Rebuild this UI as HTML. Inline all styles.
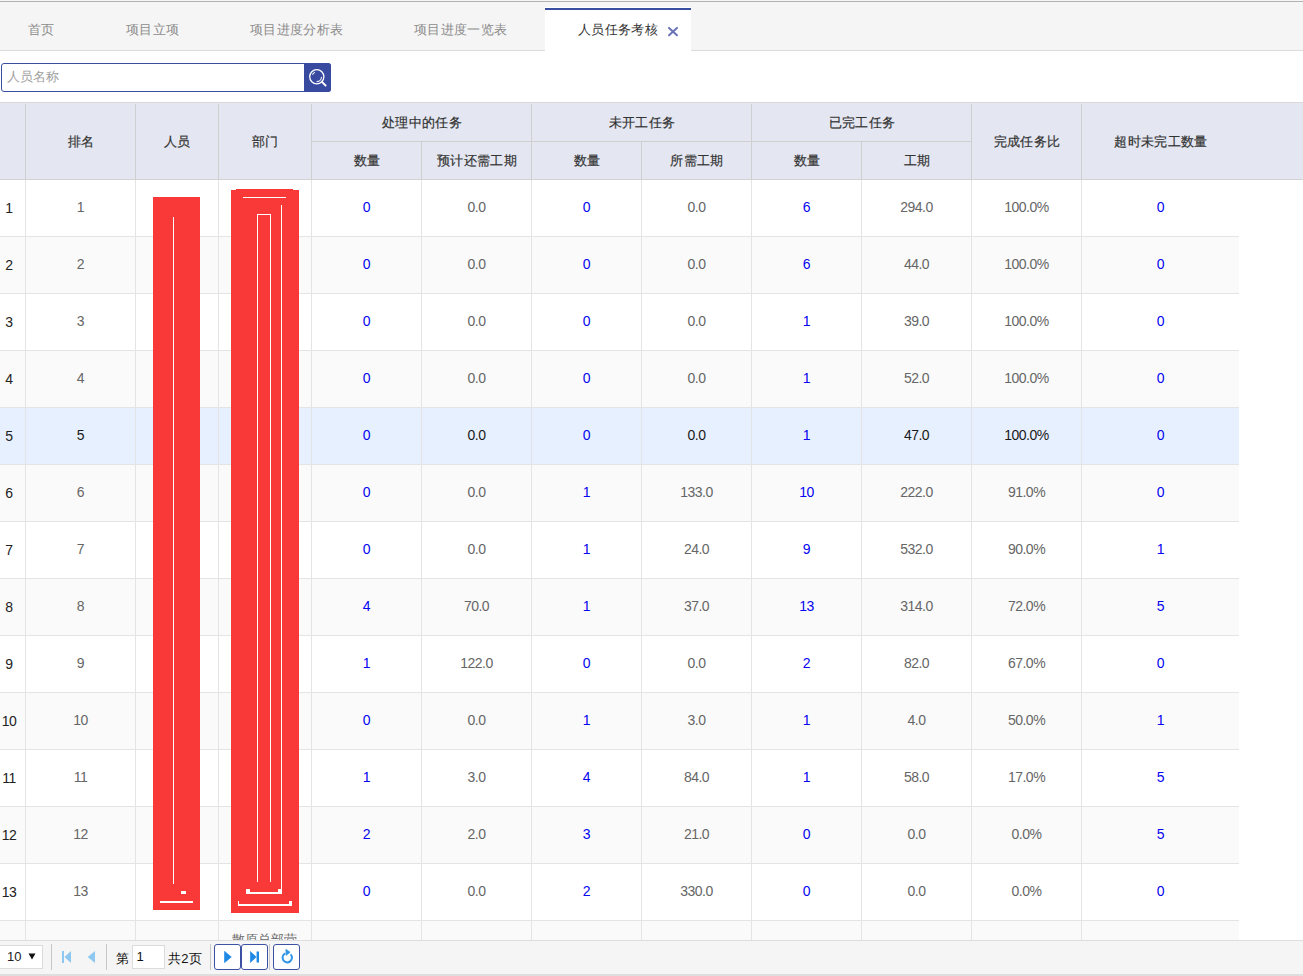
<!DOCTYPE html>
<html><head><meta charset="utf-8"><style>
*{box-sizing:border-box;margin:0;padding:0}
html,body{width:1303px;height:976px;overflow:hidden;background:#fff;font-family:"Liberation Sans",sans-serif;position:relative}
.abs{position:absolute}
.t{position:absolute;white-space:nowrap;line-height:1}
.topline{left:0;top:0;width:1303px;height:1px;background:#f5f5f5}
.topline2{left:0;top:1px;width:1303px;height:1px;background:#b3b0b6}
.tabbar{left:0;top:2px;width:1303px;height:49px;background:#f5f5f5;border-bottom:1px solid #dcdcdc}
.tab{font-size:13px;color:#8c8c8c;top:23.4px;letter-spacing:0.35px}
.acttab{left:545px;top:7px;width:146px;height:44px;background:#fff;border-top:1px solid #fff}
.actbar{left:545px;top:8px;width:146px;height:2px;background:#384ea0}
.search{left:1px;top:63px;width:330px;height:29px;border:1px solid #3a4ea0;border-radius:3px;background:#fff}
.sbtn{left:304px;top:63px;width:27px;height:29px;background:#374aa0;border-radius:0 3px 3px 0}
.ph{left:7px;top:70.4px;font-size:13px;color:#a0a0a0}
.hdr{left:0;top:102px;width:1303px;height:78px;background:#e4e7f1;border-top:1px solid #d8d8d8;border-bottom:1px solid #d2d2d2}
.hv{position:absolute;width:1px;background:#cfcfcf}
.hh{position:absolute;height:1px;background:#cfcfcf}
.ht{font-size:13px;letter-spacing:0.35px;font-weight:normal;-webkit-text-stroke:0.2px #333;color:#333;text-align:center}
.row{position:absolute;left:0;width:1239px;height:57px;border-bottom:1px solid #e4e4e4}
.bv{position:absolute;width:1px;background:#e4e4e4}
.c{position:absolute;font-size:14px;letter-spacing:-0.5px;color:#666;text-align:center;line-height:1}
.b{color:#0505f0}
.k{color:#1a1a1a}
.footer{left:0;top:940px;width:1303px;height:36px;background:#f5f5f5;border-top:1px solid #dedede}
.fbot{left:0;top:974px;width:1303px;height:2px;background:#dedede}
.red{position:absolute;background:#f93838}
.w{position:absolute;background:#fff}
</style></head><body>

<div class="abs topline"></div><div class="abs topline2"></div><div class="abs tabbar"></div>
<div class="t tab" style="left:28px">首页</div>
<div class="t tab" style="left:126px">项目立项</div>
<div class="t tab" style="left:250px">项目进度分析表</div>
<div class="t tab" style="left:414px">项目进度一览表</div>
<div class="abs acttab"></div><div class="abs actbar"></div>
<div class="t tab" style="left:578px;color:#333">人员任务考核</div>
<svg class="abs" style="left:667px;top:26px" width="12" height="12" viewBox="0 0 12 12"><path d="M2 1.9L10 9.3M10 1.9L2 9.3" stroke="#6a74b6" stroke-width="2" stroke-linecap="round"/></svg>
<div class="abs search"></div><div class="abs sbtn"></div><div class="t ph">人员名称</div>
<svg class="abs" style="left:304px;top:63px" width="27" height="29" viewBox="0 0 27 29"><circle cx="12.8" cy="13.7" r="7.1" fill="none" stroke="#fff" stroke-width="1.3"/><path d="M17.9 18.8L21.6 22.5" stroke="#fff" stroke-width="1.9" stroke-linecap="round"/><path d="M8.4 11.8A5 5 0 0 1 10.9 9.2" stroke="#e6e9f5" stroke-width="1.1" fill="none"/><path d="M17.6 13.9A5 5 0 0 1 12.6 18.6" stroke="#e6e9f5" stroke-width="1.1" fill="none"/></svg>
<div class="abs hdr"></div>
<div class="hv" style="left:25px;top:104px;height:75px"></div>
<div class="hv" style="left:135px;top:104px;height:75px"></div>
<div class="hv" style="left:218px;top:104px;height:75px"></div>
<div class="hv" style="left:311px;top:104px;height:75px"></div>
<div class="hv" style="left:531px;top:104px;height:75px"></div>
<div class="hv" style="left:751px;top:104px;height:75px"></div>
<div class="hv" style="left:971px;top:104px;height:75px"></div>
<div class="hv" style="left:1081px;top:104px;height:75px"></div>
<div class="hv" style="left:421px;top:142px;height:37px"></div>
<div class="hv" style="left:641px;top:142px;height:37px"></div>
<div class="hv" style="left:861px;top:142px;height:37px"></div>
<div class="hh" style="left:311px;top:141px;width:660px"></div>
<div class="t ht" style="left:26px;width:110px;top:135px">排名</div>
<div class="t ht" style="left:136px;width:83px;top:135px">人员</div>
<div class="t ht" style="left:219px;width:93px;top:135px">部门</div>
<div class="t ht" style="left:312px;width:220px;top:116px">处理中的任务</div>
<div class="t ht" style="left:532px;width:220px;top:116px">未开工任务</div>
<div class="t ht" style="left:752px;width:220px;top:116px">已完工任务</div>
<div class="t ht" style="left:972px;width:110px;top:135px">完成任务比</div>
<div class="t ht" style="left:1082px;width:158px;top:135px">超时未完工数量</div>
<div class="t ht" style="left:312px;width:110px;top:154px">数量</div>
<div class="t ht" style="left:422px;width:110px;top:154px">预计还需工期</div>
<div class="t ht" style="left:532px;width:110px;top:154px">数量</div>
<div class="t ht" style="left:642px;width:110px;top:154px">所需工期</div>
<div class="t ht" style="left:752px;width:110px;top:154px">数量</div>
<div class="t ht" style="left:862px;width:110px;top:154px">工期</div>
<div class="row" style="top:180px;background:#fff"></div>
<div class="row" style="top:237px;background:#fafafa"></div>
<div class="row" style="top:294px;background:#fff"></div>
<div class="row" style="top:351px;background:#fafafa"></div>
<div class="row" style="top:408px;background:#e7f0fe"></div>
<div class="row" style="top:465px;background:#fafafa"></div>
<div class="row" style="top:522px;background:#fff"></div>
<div class="row" style="top:579px;background:#fafafa"></div>
<div class="row" style="top:636px;background:#fff"></div>
<div class="row" style="top:693px;background:#fafafa"></div>
<div class="row" style="top:750px;background:#fff"></div>
<div class="row" style="top:807px;background:#fafafa"></div>
<div class="row" style="top:864px;background:#fff"></div>
<div class="row" style="top:921px;background:#fafafa"></div>
<div class="bv" style="left:25px;top:180px;height:760px"></div>
<div class="bv" style="left:135px;top:180px;height:760px"></div>
<div class="bv" style="left:218px;top:180px;height:760px"></div>
<div class="bv" style="left:311px;top:180px;height:760px"></div>
<div class="bv" style="left:421px;top:180px;height:760px"></div>
<div class="bv" style="left:531px;top:180px;height:760px"></div>
<div class="bv" style="left:641px;top:180px;height:760px"></div>
<div class="bv" style="left:751px;top:180px;height:760px"></div>
<div class="bv" style="left:861px;top:180px;height:760px"></div>
<div class="bv" style="left:971px;top:180px;height:760px"></div>
<div class="bv" style="left:1081px;top:180px;height:760px"></div>
<div class="c" style="left:-0.5px;width:19px;top:201px;color:#222">1</div>
<div class="c " style="left:25.5px;width:110px;top:200px">1</div>
<div class="c b" style="left:311.5px;width:110px;top:200px">0</div>
<div class="c " style="left:421.5px;width:110px;top:200px">0.0</div>
<div class="c b" style="left:531.5px;width:110px;top:200px">0</div>
<div class="c " style="left:641.5px;width:110px;top:200px">0.0</div>
<div class="c b" style="left:751.5px;width:110px;top:200px">6</div>
<div class="c " style="left:861.5px;width:110px;top:200px">294.0</div>
<div class="c " style="left:971.5px;width:110px;top:200px">100.0%</div>
<div class="c b" style="left:1081.5px;width:158px;top:200px">0</div>
<div class="c" style="left:-0.5px;width:19px;top:258px;color:#222">2</div>
<div class="c " style="left:25.5px;width:110px;top:257px">2</div>
<div class="c b" style="left:311.5px;width:110px;top:257px">0</div>
<div class="c " style="left:421.5px;width:110px;top:257px">0.0</div>
<div class="c b" style="left:531.5px;width:110px;top:257px">0</div>
<div class="c " style="left:641.5px;width:110px;top:257px">0.0</div>
<div class="c b" style="left:751.5px;width:110px;top:257px">6</div>
<div class="c " style="left:861.5px;width:110px;top:257px">44.0</div>
<div class="c " style="left:971.5px;width:110px;top:257px">100.0%</div>
<div class="c b" style="left:1081.5px;width:158px;top:257px">0</div>
<div class="c" style="left:-0.5px;width:19px;top:315px;color:#222">3</div>
<div class="c " style="left:25.5px;width:110px;top:314px">3</div>
<div class="c b" style="left:311.5px;width:110px;top:314px">0</div>
<div class="c " style="left:421.5px;width:110px;top:314px">0.0</div>
<div class="c b" style="left:531.5px;width:110px;top:314px">0</div>
<div class="c " style="left:641.5px;width:110px;top:314px">0.0</div>
<div class="c b" style="left:751.5px;width:110px;top:314px">1</div>
<div class="c " style="left:861.5px;width:110px;top:314px">39.0</div>
<div class="c " style="left:971.5px;width:110px;top:314px">100.0%</div>
<div class="c b" style="left:1081.5px;width:158px;top:314px">0</div>
<div class="c" style="left:-0.5px;width:19px;top:372px;color:#222">4</div>
<div class="c " style="left:25.5px;width:110px;top:371px">4</div>
<div class="c b" style="left:311.5px;width:110px;top:371px">0</div>
<div class="c " style="left:421.5px;width:110px;top:371px">0.0</div>
<div class="c b" style="left:531.5px;width:110px;top:371px">0</div>
<div class="c " style="left:641.5px;width:110px;top:371px">0.0</div>
<div class="c b" style="left:751.5px;width:110px;top:371px">1</div>
<div class="c " style="left:861.5px;width:110px;top:371px">52.0</div>
<div class="c " style="left:971.5px;width:110px;top:371px">100.0%</div>
<div class="c b" style="left:1081.5px;width:158px;top:371px">0</div>
<div class="c" style="left:-0.5px;width:19px;top:429px;color:#222">5</div>
<div class="c  k" style="left:25.5px;width:110px;top:428px">5</div>
<div class="c b" style="left:311.5px;width:110px;top:428px">0</div>
<div class="c k" style="left:421.5px;width:110px;top:428px">0.0</div>
<div class="c b" style="left:531.5px;width:110px;top:428px">0</div>
<div class="c k" style="left:641.5px;width:110px;top:428px">0.0</div>
<div class="c b" style="left:751.5px;width:110px;top:428px">1</div>
<div class="c k" style="left:861.5px;width:110px;top:428px">47.0</div>
<div class="c k" style="left:971.5px;width:110px;top:428px">100.0%</div>
<div class="c b" style="left:1081.5px;width:158px;top:428px">0</div>
<div class="c" style="left:-0.5px;width:19px;top:486px;color:#222">6</div>
<div class="c " style="left:25.5px;width:110px;top:485px">6</div>
<div class="c b" style="left:311.5px;width:110px;top:485px">0</div>
<div class="c " style="left:421.5px;width:110px;top:485px">0.0</div>
<div class="c b" style="left:531.5px;width:110px;top:485px">1</div>
<div class="c " style="left:641.5px;width:110px;top:485px">133.0</div>
<div class="c b" style="left:751.5px;width:110px;top:485px">10</div>
<div class="c " style="left:861.5px;width:110px;top:485px">222.0</div>
<div class="c " style="left:971.5px;width:110px;top:485px">91.0%</div>
<div class="c b" style="left:1081.5px;width:158px;top:485px">0</div>
<div class="c" style="left:-0.5px;width:19px;top:543px;color:#222">7</div>
<div class="c " style="left:25.5px;width:110px;top:542px">7</div>
<div class="c b" style="left:311.5px;width:110px;top:542px">0</div>
<div class="c " style="left:421.5px;width:110px;top:542px">0.0</div>
<div class="c b" style="left:531.5px;width:110px;top:542px">1</div>
<div class="c " style="left:641.5px;width:110px;top:542px">24.0</div>
<div class="c b" style="left:751.5px;width:110px;top:542px">9</div>
<div class="c " style="left:861.5px;width:110px;top:542px">532.0</div>
<div class="c " style="left:971.5px;width:110px;top:542px">90.0%</div>
<div class="c b" style="left:1081.5px;width:158px;top:542px">1</div>
<div class="c" style="left:-0.5px;width:19px;top:600px;color:#222">8</div>
<div class="c " style="left:25.5px;width:110px;top:599px">8</div>
<div class="c b" style="left:311.5px;width:110px;top:599px">4</div>
<div class="c " style="left:421.5px;width:110px;top:599px">70.0</div>
<div class="c b" style="left:531.5px;width:110px;top:599px">1</div>
<div class="c " style="left:641.5px;width:110px;top:599px">37.0</div>
<div class="c b" style="left:751.5px;width:110px;top:599px">13</div>
<div class="c " style="left:861.5px;width:110px;top:599px">314.0</div>
<div class="c " style="left:971.5px;width:110px;top:599px">72.0%</div>
<div class="c b" style="left:1081.5px;width:158px;top:599px">5</div>
<div class="c" style="left:-0.5px;width:19px;top:657px;color:#222">9</div>
<div class="c " style="left:25.5px;width:110px;top:656px">9</div>
<div class="c b" style="left:311.5px;width:110px;top:656px">1</div>
<div class="c " style="left:421.5px;width:110px;top:656px">122.0</div>
<div class="c b" style="left:531.5px;width:110px;top:656px">0</div>
<div class="c " style="left:641.5px;width:110px;top:656px">0.0</div>
<div class="c b" style="left:751.5px;width:110px;top:656px">2</div>
<div class="c " style="left:861.5px;width:110px;top:656px">82.0</div>
<div class="c " style="left:971.5px;width:110px;top:656px">67.0%</div>
<div class="c b" style="left:1081.5px;width:158px;top:656px">0</div>
<div class="c" style="left:-0.5px;width:19px;top:714px;color:#222">10</div>
<div class="c " style="left:25.5px;width:110px;top:713px">10</div>
<div class="c b" style="left:311.5px;width:110px;top:713px">0</div>
<div class="c " style="left:421.5px;width:110px;top:713px">0.0</div>
<div class="c b" style="left:531.5px;width:110px;top:713px">1</div>
<div class="c " style="left:641.5px;width:110px;top:713px">3.0</div>
<div class="c b" style="left:751.5px;width:110px;top:713px">1</div>
<div class="c " style="left:861.5px;width:110px;top:713px">4.0</div>
<div class="c " style="left:971.5px;width:110px;top:713px">50.0%</div>
<div class="c b" style="left:1081.5px;width:158px;top:713px">1</div>
<div class="c" style="left:-0.5px;width:19px;top:771px;color:#222">11</div>
<div class="c " style="left:25.5px;width:110px;top:770px">11</div>
<div class="c b" style="left:311.5px;width:110px;top:770px">1</div>
<div class="c " style="left:421.5px;width:110px;top:770px">3.0</div>
<div class="c b" style="left:531.5px;width:110px;top:770px">4</div>
<div class="c " style="left:641.5px;width:110px;top:770px">84.0</div>
<div class="c b" style="left:751.5px;width:110px;top:770px">1</div>
<div class="c " style="left:861.5px;width:110px;top:770px">58.0</div>
<div class="c " style="left:971.5px;width:110px;top:770px">17.0%</div>
<div class="c b" style="left:1081.5px;width:158px;top:770px">5</div>
<div class="c" style="left:-0.5px;width:19px;top:828px;color:#222">12</div>
<div class="c " style="left:25.5px;width:110px;top:827px">12</div>
<div class="c b" style="left:311.5px;width:110px;top:827px">2</div>
<div class="c " style="left:421.5px;width:110px;top:827px">2.0</div>
<div class="c b" style="left:531.5px;width:110px;top:827px">3</div>
<div class="c " style="left:641.5px;width:110px;top:827px">21.0</div>
<div class="c b" style="left:751.5px;width:110px;top:827px">0</div>
<div class="c " style="left:861.5px;width:110px;top:827px">0.0</div>
<div class="c " style="left:971.5px;width:110px;top:827px">0.0%</div>
<div class="c b" style="left:1081.5px;width:158px;top:827px">5</div>
<div class="c" style="left:-0.5px;width:19px;top:885px;color:#222">13</div>
<div class="c " style="left:25.5px;width:110px;top:884px">13</div>
<div class="c b" style="left:311.5px;width:110px;top:884px">0</div>
<div class="c " style="left:421.5px;width:110px;top:884px">0.0</div>
<div class="c b" style="left:531.5px;width:110px;top:884px">2</div>
<div class="c " style="left:641.5px;width:110px;top:884px">330.0</div>
<div class="c b" style="left:751.5px;width:110px;top:884px">0</div>
<div class="c " style="left:861.5px;width:110px;top:884px">0.0</div>
<div class="c " style="left:971.5px;width:110px;top:884px">0.0%</div>
<div class="c b" style="left:1081.5px;width:158px;top:884px">0</div>
<div class="red" style="left:153px;top:197px;width:47px;height:713px"></div>
<div class="red" style="left:231px;top:190px;width:68px;height:723px"></div>
<div class="red" style="left:236px;top:189px;width:57px;height:1px"></div>
<div class="w" style="left:173px;top:217px;width:1px;height:667px"></div>
<div class="w" style="left:160px;top:901px;width:33px;height:2px"></div>
<div class="w" style="left:181px;top:891px;width:5px;height:3px"></div>
<div class="w" style="left:243px;top:197px;width:43px;height:1px"></div>
<div class="w" style="left:257px;top:214px;width:1px;height:668px"></div>
<div class="w" style="left:270px;top:214px;width:1px;height:668px"></div>
<div class="w" style="left:257px;top:214px;width:14px;height:1px"></div>
<div class="w" style="left:281px;top:205px;width:1px;height:681px"></div>
<div class="w" style="left:246px;top:889px;width:4px;height:5px"></div>
<div class="w" style="left:278px;top:889px;width:4px;height:5px"></div>
<div class="w" style="left:246px;top:892px;width:36px;height:2px"></div>
<div class="w" style="left:238px;top:901px;width:1px;height:5px"></div>
<div class="w" style="left:238px;top:904px;width:54px;height:2px"></div>
<div class="w" style="left:289px;top:901px;width:3px;height:5px"></div>
<div class="w" style="left:281px;top:886px;width:1px;height:5px"></div>
<div class="t" style="left:232px;top:933px;font-size:13px;color:#666;height:7px;overflow:hidden">散原总部营</div>
<div class="abs footer"></div><div class="abs fbot"></div>
<div class="abs" style="left:-2px;top:945px;width:45px;height:24px;background:#fff;border:1px solid #dcdcdc"></div>
<div class="t" style="left:7px;top:950px;font-size:13px;color:#222">10</div>
<svg class="abs" style="left:28px;top:953px" width="8" height="7"><path d="M0.5 0.5H7.5L4 6.5Z" fill="#111"/></svg>
<div class="abs" style="left:51px;top:944px;width:1px;height:26px;background:#c8c8c8"></div>
<div class="abs" style="left:106px;top:944px;width:1px;height:26px;background:#c8c8c8"></div>
<div class="abs" style="left:210px;top:944px;width:1px;height:26px;background:#c8c8c8"></div>
<div class="abs" style="left:269px;top:944px;width:1px;height:26px;background:#c8c8c8"></div>
<svg class="abs" style="left:62px;top:951px" width="10" height="12"><rect x="0" y="0" width="2" height="12" fill="#8ec7ef"/><path d="M9 0V12L2.5 6Z" fill="#8ec7ef"/></svg>
<svg class="abs" style="left:87px;top:951px" width="9" height="12"><path d="M8 0V12L0.7 6Z" fill="#8ec7ef"/></svg>
<div class="t" style="left:116px;top:951.5px;font-size:13px;color:#111">第</div>
<div class="abs" style="left:132px;top:945px;width:33px;height:24px;background:#fff;border:1px solid #dcdcdc"></div>
<div class="t" style="left:136.5px;top:950px;font-size:13px;color:#111">1</div>
<div class="t" style="left:168px;top:951.5px;font-size:13px;letter-spacing:0.3px;color:#111">共2页</div>
<div class="abs" style="left:214px;top:944px;width:27px;height:26px;border:1px solid #3d51a3;border-radius:3px;background:#fff"></div>
<div class="abs" style="left:241px;top:944px;width:27px;height:26px;border:1px solid #3d51a3;border-radius:3px;background:#fff"></div>
<div class="abs" style="left:273px;top:944px;width:27px;height:26px;border:1px solid #3d51a3;border-radius:3px;background:#fff"></div>
<svg class="abs" style="left:224px;top:951px" width="8" height="12"><path d="M0.5 0.3V11.7L7.3 6Z" fill="#1e88e5" stroke="#1e88e5" stroke-width="0.6" stroke-linejoin="round"/></svg>
<svg class="abs" style="left:250px;top:951px" width="10" height="12"><path d="M0.3 0.5V11.5L6.3 6Z" fill="#1e88e5" stroke="#1e88e5" stroke-width="0.6" stroke-linejoin="round"/><rect x="6.6" y="0.5" width="2.4" height="11" fill="#1e88e5"/></svg>
<svg class="abs" style="left:277px;top:946px" width="20" height="20" viewBox="0 0 20 20"><path d="M13.6 8.4A4.7 4.7 0 1 1 8.3 7.4" fill="none" stroke="#2f95e6" stroke-width="2"/><path d="M8.9 3.4L13.1 6.2L9.2 9.3Z" fill="#2f95e6" stroke="#2f95e6" stroke-width="0.8" stroke-linejoin="round"/></svg>
</body></html>
